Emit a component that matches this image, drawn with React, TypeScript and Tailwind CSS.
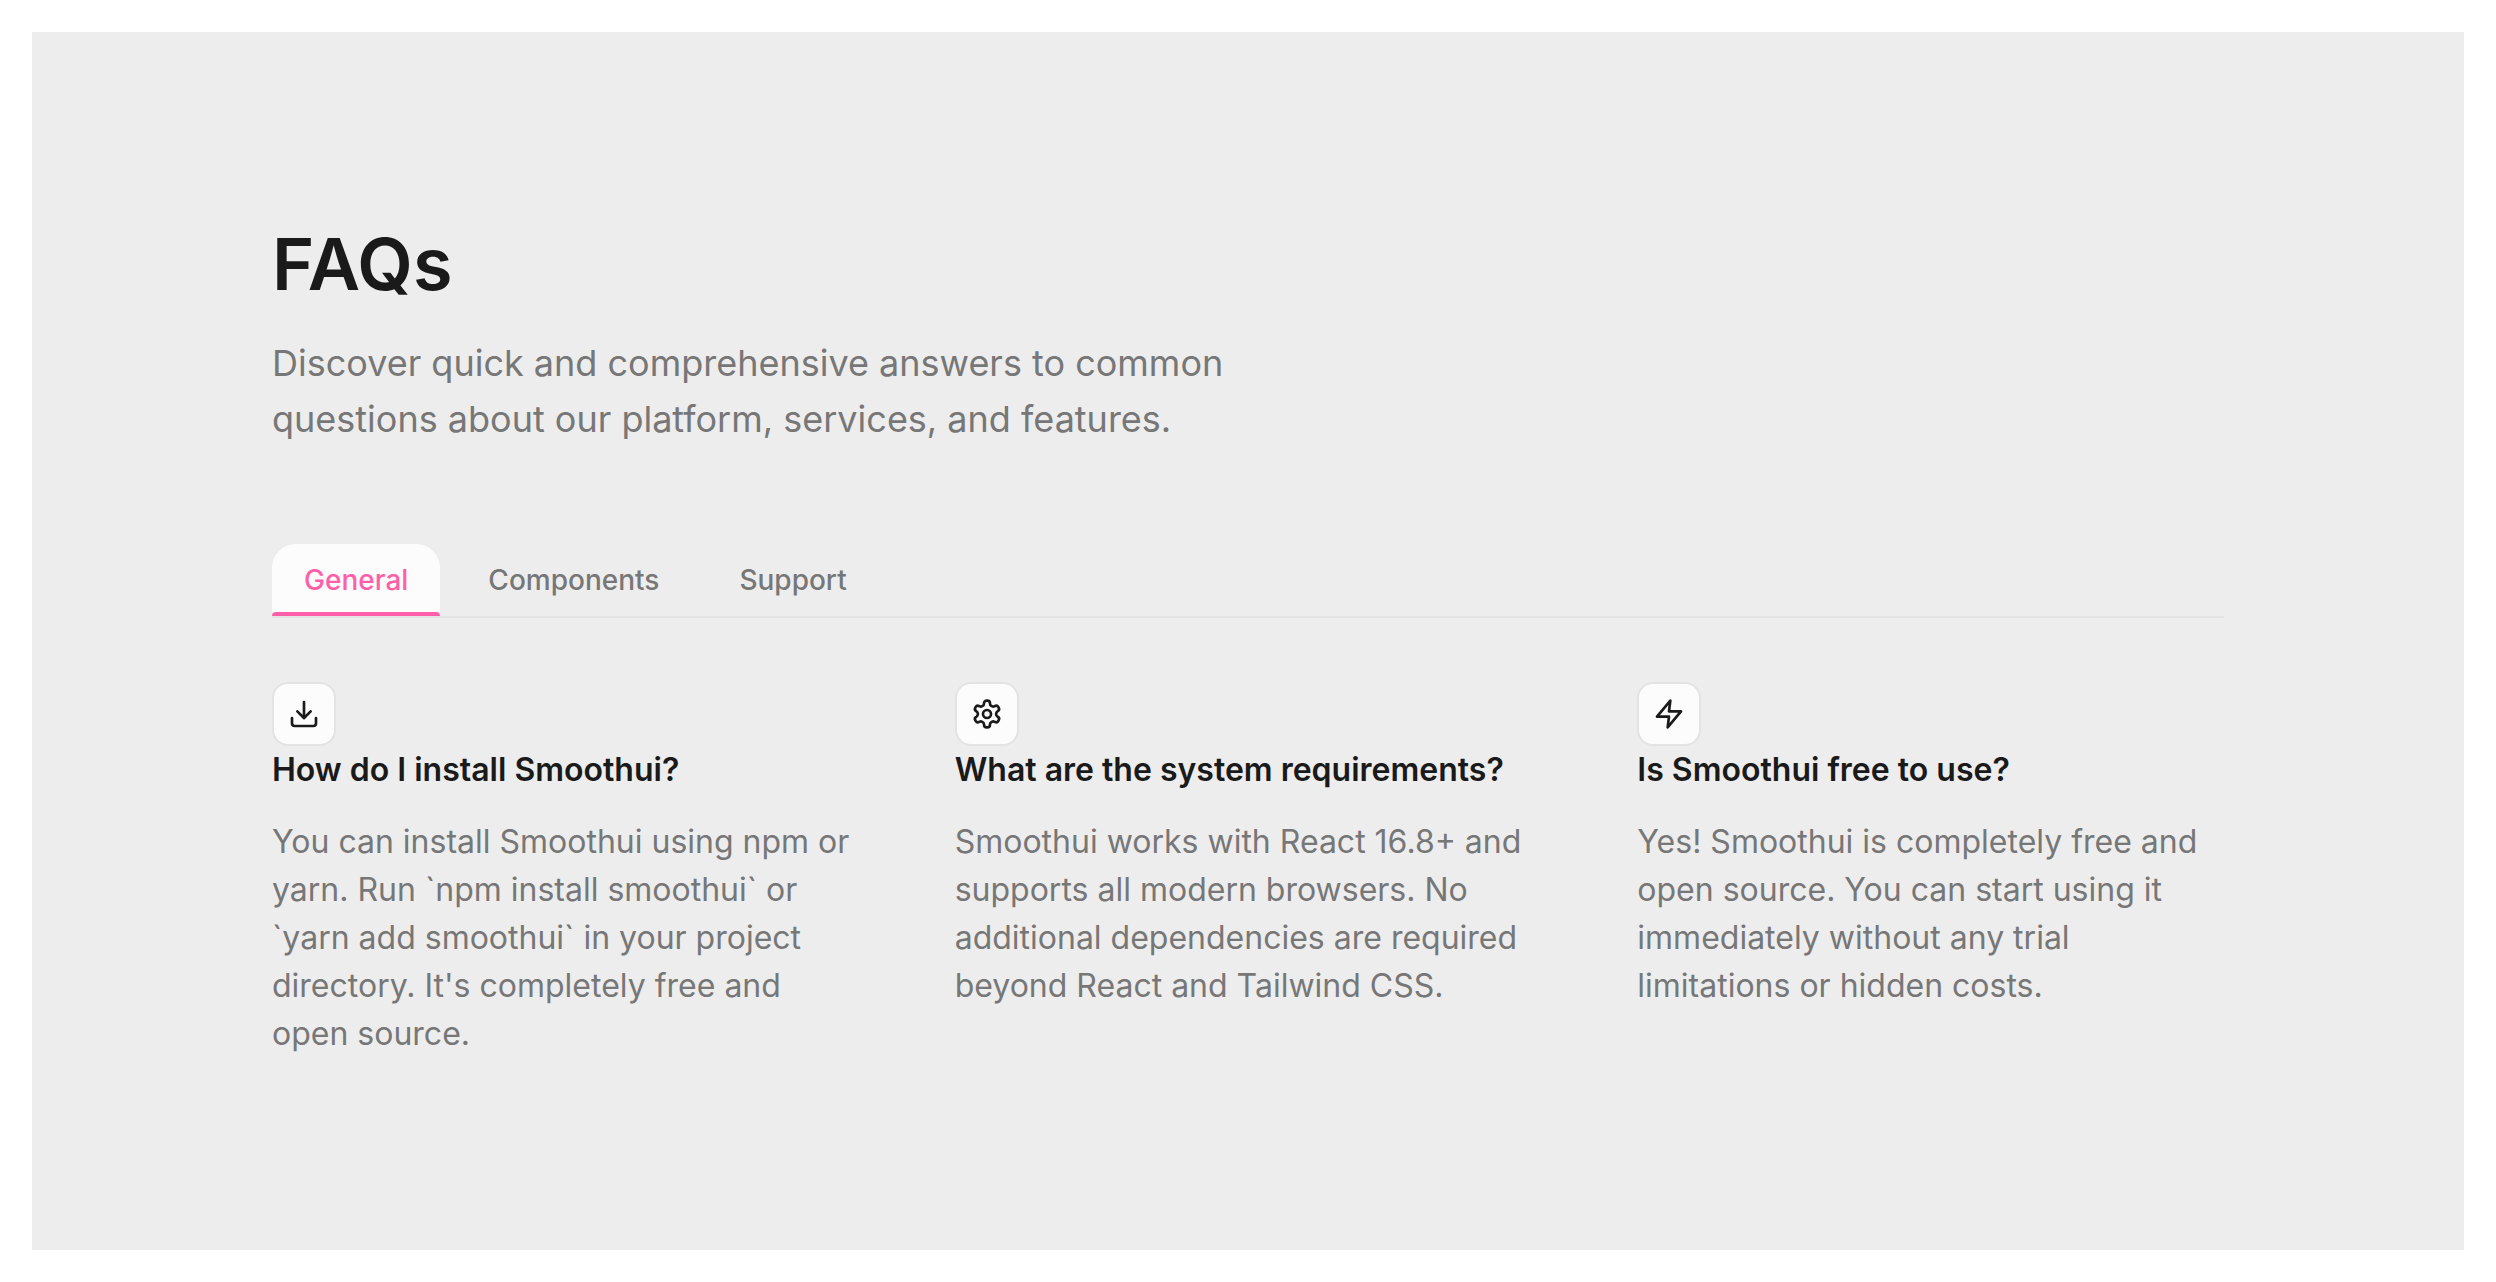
import { Download } from 'lucide-react';
import type { ReactNode } from 'react';

function IconBox({ children }: { children: ReactNode }) {
  return (
    <div className="flex h-16 w-16 items-center justify-center rounded-2xl border-2 border-[#e3e3e3] bg-[#fcfcfc]">
      {children}
    </div>
  );
}

function GearIcon() {
  return (
    <svg width="32" height="32" viewBox="0 0 24 24" fill="none" stroke="#1a1a1a" strokeWidth="2" strokeLinecap="round" strokeLinejoin="round">
      <path d="M12.22 2h-.44a2 2 0 0 0-2 2v.18a2 2 0 0 1-1 1.73l-.43.25a2 2 0 0 1-2 0l-.15-.08a2 2 0 0 0-2.73.73l-.22.38a2 2 0 0 0 .73 2.73l.15.1a2 2 0 0 1 1 1.72v.51a2 2 0 0 1-1 1.74l-.15.09a2 2 0 0 0-.73 2.73l.22.38a2 2 0 0 0 2.73.73l.15-.08a2 2 0 0 1 2 0l.43.25a2 2 0 0 1 1 1.73V20a2 2 0 0 0 2 2h.44a2 2 0 0 0 2-2v-.18a2 2 0 0 1 1-1.73l.43-.25a2 2 0 0 1 2 0l.15.08a2 2 0 0 0 2.73-.73l.22-.39a2 2 0 0 0-.73-2.73l-.15-.08a2 2 0 0 1-1-1.74v-.5a2 2 0 0 1 1-1.74l.15-.09a2 2 0 0 0 .73-2.73l-.22-.38a2 2 0 0 0-2.73-.73l-.15.08a2 2 0 0 1-2 0l-.43-.25a2 2 0 0 1-1-1.73V4a2 2 0 0 0-2-2z" />
      <circle cx="12" cy="12" r="3" />
    </svg>
  );
}

function BoltIcon() {
  return (
    <svg width="32" height="32" viewBox="0 0 24 24" fill="none" stroke="#1a1a1a" strokeWidth="2" strokeLinecap="round" strokeLinejoin="round">
      <path d="M13 2 3 14h9l-1 8 10-12h-9l1-8z" />
    </svg>
  );
}

const faqs = [
  {
    icon: <Download size={32} strokeWidth={2} className="text-[#1a1a1a]" />,
    title: 'How do I install Smoothui?',
    body: "You can install Smoothui using npm or yarn. Run `npm install smoothui` or `yarn add smoothui` in your project directory. It's completely free and open source.",
  },
  {
    icon: <GearIcon />,
    title: 'What are the system requirements?',
    body: 'Smoothui works with React 16.8+ and supports all modern browsers. No additional dependencies are required beyond React and Tailwind CSS.',
  },
  {
    icon: <BoltIcon />,
    title: 'Is Smoothui free to use?',
    body: 'Yes! Smoothui is completely free and open source. You can start using it immediately without any trial limitations or hidden costs.',
  },
];

export default function App() {
  return (
    <div className="h-[1282px] bg-white p-8 font-['Inter',sans-serif]">
      <div className="h-[1218px] bg-[#ededed] px-[240px] pt-[192px]">
        <h1 className="text-[72px] leading-[80px] font-semibold text-[#1a1a1a]">FAQs</h1>
        <p className="mt-[31px] w-[1000px] text-[36px] leading-[56px] text-[#777777]">
          Discover quick and comprehensive answers to common questions about our platform, services, and features.
        </p>

        <div className="mt-[97px] flex gap-4 border-b-2 border-[#e3e3e3]">
          <button className="relative h-[72px] rounded-t-3xl bg-[#fcfcfc] px-8 text-[28px] font-medium text-[#ff5fa8]">
            General
            <span className="absolute inset-x-0 bottom-0 h-1 rounded-t-sm bg-[#ff5fa8]" />
          </button>
          <button className="h-[72px] px-8 text-[28px] font-medium text-[#777777]">Components</button>
          <button className="h-[72px] px-8 text-[28px] font-medium text-[#777777]">Support</button>
        </div>

        <div className="mt-16 grid grid-cols-3 gap-24">
          {faqs.map((faq) => (
            <div key={faq.title}>
              <IconBox>{faq.icon}</IconBox>
              <h3 className="text-[32px] leading-[48px] font-semibold text-[#1a1a1a]">{faq.title}</h3>
              <p className="mt-6 text-[32px] leading-[48px] text-[#777777]">{faq.body}</p>
            </div>
          ))}
        </div>
      </div>
    </div>
  );
}
